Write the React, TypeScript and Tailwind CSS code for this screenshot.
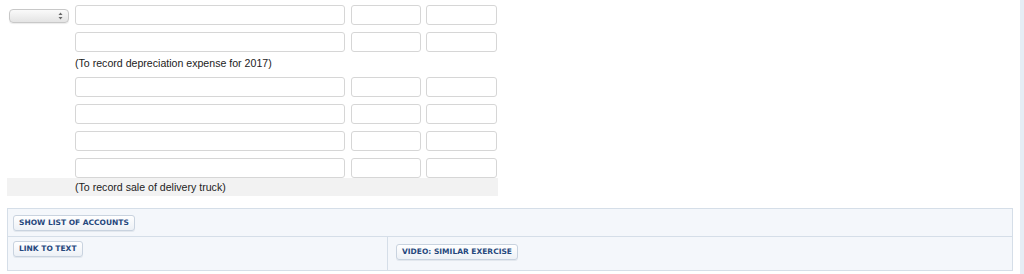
import type { ReactNode } from 'react';

const Field = ({ className }: { className: string }) => (
  <div className={`h-[20px] shrink-0 rounded-[3px] border border-[#d6d6d6] bg-white ${className}`} />
);

const EntryRow = ({ first }: { first?: ReactNode }) => (
  <div className="flex h-[20px] items-start">
    <div className="w-[69px] shrink-0">{first}</div>
    <Field className="w-[270px]" />
    <Field className="ml-[6px] w-[70px]" />
    <Field className="ml-[5px] w-[71px]" />
  </div>
);

const Note = ({ children }: { children: ReactNode }) => (
  <p className="pl-[69px] text-[10.6px] leading-[13px] text-[#222]">{children}</p>
);

const Btn = ({ children }: { children: ReactNode }) => (
  <button className="block h-[16px] rounded-[3px] border border-[#c9d3df] bg-gradient-to-b from-white to-[#edf1f6] px-[5px] font-['DejaVu_Sans',sans-serif] text-[7.5px] font-bold leading-[14px] text-[#26487d] shadow-[0_1px_0_#e3e8ee]">
    {children}
  </button>
);

const SelectBox = () => (
  <div className="ml-[3px] mt-[4px] flex h-[14px] w-[60px] items-center justify-end rounded-[4px] border border-[#c8c8c8] bg-gradient-to-b from-[#fafafa] to-[#e4e4e4] pr-[5px] shadow-[0_1px_1px_rgba(0,0,0,0.08)]">
    <svg width="5" height="8" viewBox="0 0 5 8">
      <path d="M2.5 0.5 L4.5 3 L0.5 3 Z" fill="#666" />
      <path d="M2.5 7.5 L4.5 5 L0.5 5 Z" fill="#666" />
    </svg>
  </div>
);

export default function App() {
  return (
    <div className="relative h-[274px] w-[1024px] overflow-hidden bg-white font-['Liberation_Sans',Arial,sans-serif]">
      <div className="absolute right-0 top-0 h-full w-[4px] bg-[#e6edf5]" />

      <div className="w-[498px] pl-[6px] pt-[5px]">
        <div className="flex flex-col gap-[7px]">
          <EntryRow first={<SelectBox />} />
          <EntryRow />
        </div>
        <div className="pt-[5px]">
          <Note>(To record depreciation expense for 2017)</Note>
        </div>
        <div className="mt-[7px] flex flex-col gap-[7px]">
          <EntryRow />
          <EntryRow />
          <EntryRow />
          <EntryRow />
        </div>
        <div className="ml-px flex h-[18px] items-center bg-[#f2f2f2]">
          <div className="-ml-px">
            <Note>(To record sale of delivery truck)</Note>
          </div>
        </div>
      </div>

      <div className="ml-[7px] mt-[12px] w-[1006px] border border-[#d5dee8] bg-[#f4f7fb]">
        <div className="flex h-[28px] items-center border-b border-[#d5dee8] pl-[5px]">
          <Btn>SHOW LIST OF ACCOUNTS</Btn>
        </div>
        <div className="flex h-[33px]">
          <div className="flex w-[380px] items-start border-r border-[#d5dee8] pl-[5px] pt-[4px]">
            <Btn>LINK TO TEXT</Btn>
          </div>
          <div className="flex flex-1 items-start pl-[8px] pt-[7px]">
            <Btn>VIDEO: SIMILAR EXERCISE</Btn>
          </div>
        </div>
      </div>
    </div>
  );
}
